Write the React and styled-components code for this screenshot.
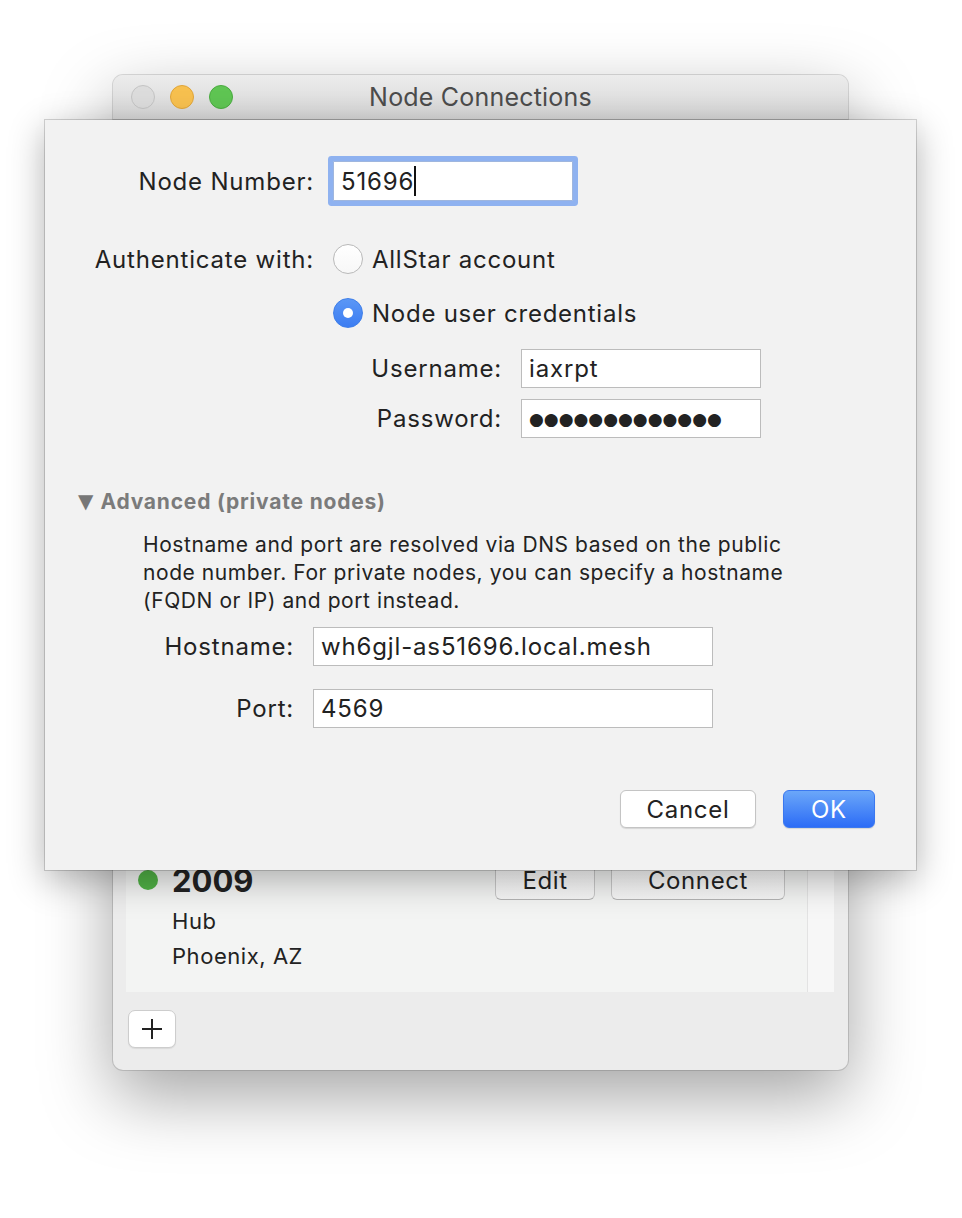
import styled, { createGlobalStyle } from "styled-components";

const GlobalStyle = createGlobalStyle`
  html, body {
    margin: 0;
    padding: 0;
    background: #ffffff;
  }
  body {
    font-family: "Inter", "Roboto", "Liberation Sans", sans-serif;
    color: #222;
    -webkit-font-smoothing: antialiased;
  }
`;

const Stage = styled.div`
  width: 962px;
  height: 1218px;
  padding: 75px 0 0 113px;
  box-sizing: border-box;
  display: flex;
  align-items: flex-start;
`;

const Window = styled.div`
  position: relative;
  width: 735px;
  height: 995px;
  display: flex;
  flex-direction: column;
  background: #ececec;
  border-radius: 10px;
  box-shadow: 0 0 0 1px rgba(0, 0, 0, 0.13), 0 26px 70px rgba(0, 0, 0, 0.36);
`;

const TitleBar = styled.div`
  height: 44px;
  display: grid;
  grid-template-columns: 1fr auto 1fr;
  align-items: center;
  padding: 0 18px;
  background: linear-gradient(#ececec, #d6d6d6);
  border-bottom: 1px solid #bcbcbc;
  border-radius: 10px 10px 0 0;
`;

const Lights = styled.div`
  display: flex;
  gap: 15px;
`;

const Light = styled.span`
  width: 22px;
  height: 22px;
  border-radius: 50%;
  background: ${(p) => p.$fill};
  border: 1px solid ${(p) => p.$edge};
`;

const Title = styled.div`
  font-size: 25px;
  color: #4c4c4c;
  letter-spacing: 0.2px;
`;

const Content = styled.div`
  flex: 1;
  display: flex;
  flex-direction: column;
  padding: 0 14px 22px 13px;
`;

const List = styled.div`
  flex: 1;
  display: grid;
  grid-template-columns: 1fr 27px;
`;

const Rows = styled.div`
  display: flex;
  flex-direction: column;
  justify-content: flex-end;
  background: #f3f4f3;
`;

const ScrollTrack = styled.div`
  background: #f7f7f7;
  border-left: 1px solid #e3e3e3;
`;

const NodeRow = styled.div`
  padding: 0 22px 18px 12px;
`;

const NodeHeader = styled.div`
  height: 40px;
  display: flex;
  align-items: center;
  margin-bottom: 4px;
`;

const StatusDot = styled.span`
  width: 20px;
  height: 20px;
  border-radius: 50%;
  background: #51b246;
  margin-right: 14px;
`;

const NodeNumber = styled.span`
  font-size: 31px;
  font-weight: 700;
  color: #222;
  flex: 1;
`;

const RowButton = styled.button`
  height: 40px;
  width: ${(p) => p.$w}px;
  margin-left: ${(p) => p.$ml || 0}px;
  padding: 0;
  font-family: inherit;
  font-size: 24px;
  letter-spacing: 0.6px;
  color: #222;
  background: linear-gradient(#ffffff, #f6f6f6);
  border: 1px solid #c9c9c9;
  border-bottom-color: #b4b4b4;
  border-radius: 6px;
`;

const NodeLine = styled.div`
  margin-left: 34px;
  font-size: 22px;
  letter-spacing: 0.55px;
  line-height: 35px;
  color: #222;
`;

const Footer = styled.div`
  margin-top: 18px;
  display: flex;
`;

const PlusButton = styled.button`
  margin-left: 2px;
  width: 48px;
  height: 38px;
  display: flex;
  align-items: center;
  justify-content: center;
  background: #fff;
  border: 1px solid #cdcdcd;
  border-radius: 7px;
  box-shadow: 0 1px 1px rgba(0, 0, 0, 0.08);
  padding: 0;
`;

/* ---- sheet ---- */

const Sheet = styled.div`
  position: absolute;
  top: 45px;
  left: -68px;
  width: 871px;
  box-sizing: border-box;
  padding: 41px 0 42px;
  background: #f2f2f2;
  box-shadow: 0 0 0 1px rgba(0, 0, 0, 0.16), 0 10px 34px rgba(0, 0, 0, 0.3);
  display: flex;
  flex-direction: column;
`;

const Row = styled.div`
  display: flex;
  align-items: center;
  margin-top: ${(p) => p.$mt || 0}px;
  padding-left: ${(p) => p.$indent || 0}px;
`;

const Label = styled.span`
  width: ${(p) => p.$w}px;
  margin-right: 19px;
  text-align: right;
  font-size: 24px;
  letter-spacing: 0.8px;
  color: #222;
  white-space: nowrap;
`;

const Field = styled.div`
  width: ${(p) => p.$w}px;
  height: ${(p) => p.$h || 39}px;
  box-sizing: border-box;
  display: flex;
  align-items: center;
  padding-left: 7px;
  background: #fff;
  border: 1px solid ${(p) => (p.$focus ? "#9fb6de" : "#bcbcbc")};
  box-shadow: ${(p) => (p.$focus ? "0 0 0 5px #8fb2f0" : "none")};
  border-radius: ${(p) => (p.$focus ? "1px" : "0")};
  font-size: 24px;
  letter-spacing: 0.85px;
  color: #222;
`;

const Caret = styled.span`
  width: 2px;
  height: 30px;
  margin-left: 0;
  background: #111;
`;

const Dots = styled.span`
  font-family: "DejaVu Sans", sans-serif;
  font-size: 17px;
  letter-spacing: 0;
  color: #222;
`;

const Radio = styled.span`
  width: 30px;
  height: 30px;
  box-sizing: border-box;
  border-radius: 50%;
  margin-right: 9px;
  display: flex;
  align-items: center;
  justify-content: center;
  background: ${(p) =>
    p.$on ? "linear-gradient(#5b97f6, #3c7df2)" : "linear-gradient(#ffffff, #f7f7f7)"};
  border: 1px solid ${(p) => (p.$on ? "#3f7fe9" : "#b9b9b9")};
  &::after {
    content: "";
    display: ${(p) => (p.$on ? "block" : "none")};
    width: 10px;
    height: 10px;
    border-radius: 50%;
    background: #fff;
  }
`;

const RadioText = styled.span`
  font-size: 24px;
  letter-spacing: 0.75px;
  color: #222;
`;

const Disclosure = styled.div`
  margin-top: 49px;
  padding-left: 33px;
  height: 28px;
  display: flex;
  align-items: center;
  color: #7b7b7b;
  font-size: 21px;
  letter-spacing: 0.8px;
  font-weight: 700;
`;

const Triangle = styled.span`
  font-family: "DejaVu Sans", sans-serif;
  font-size: 20px;
  letter-spacing: 0;
  margin-right: 7px;
  color: #777;
`;

const Help = styled.p`
  margin: 16px 0 0;
  padding-left: 98px;
  width: 690px;
  font-size: 21px;
  letter-spacing: 0.57px;
  line-height: 28px;
  color: #222;
`;

const ButtonBar = styled.div`
  margin-top: 62px;
  padding-right: 41px;
  display: flex;
  justify-content: flex-end;
  gap: 27px;
`;

const PushButton = styled.button`
  height: 38px;
  width: ${(p) => p.$w}px;
  font-family: inherit;
  font-size: 24px;
  letter-spacing: 0.7px;
  border-radius: 6px;
  padding: 0;
  color: ${(p) => (p.$primary ? "#fff" : "#222")};
  background: ${(p) =>
    p.$primary ? "linear-gradient(#6ba7f9, #2c6cf6)" : "#fff"};
  border: 1px solid ${(p) => (p.$primary ? "#3b78ef" : "#c4c4c4")};
  box-shadow: 0 1px 1px rgba(0, 0, 0, 0.12);
`;

const PlusIcon = () => (
  <svg width="22" height="22" viewBox="0 0 22 22">
    <path d="M11 1v20M1 11h20" stroke="#222" strokeWidth="2" fill="none" />
  </svg>
);

export default function App() {
  return (
    <>
      <GlobalStyle />
      <Stage>
        <Window>
          <TitleBar>
            <Lights>
              <Light $fill="#dcdcdc" $edge="#c4c4c4" />
              <Light $fill="#f7c04f" $edge="#e0a53a" />
              <Light $fill="#5fc553" $edge="#4aab40" />
            </Lights>
            <Title>Node Connections</Title>
            <span />
          </TitleBar>
          <Content>
            <List>
              <Rows>
                <NodeRow>
                  <NodeHeader>
                    <StatusDot />
                    <NodeNumber>2009</NodeNumber>
                    <RowButton $w={100}>Edit</RowButton>
                    <RowButton $w={174} $ml={16}>Connect</RowButton>
                  </NodeHeader>
                  <NodeLine>Hub</NodeLine>
                  <NodeLine>Phoenix, AZ</NodeLine>
                </NodeRow>
              </Rows>
              <ScrollTrack />
            </List>
            <Footer>
              <PlusButton>
                <PlusIcon />
              </PlusButton>
            </Footer>
          </Content>

          <Sheet>
            <Row>
              <Label $w={269}>Node Number:</Label>
              <Field $w={240} $h={40} $focus>
                51696
                <Caret />
              </Field>
            </Row>
            <Row $mt={43}>
              <Label $w={269}>Authenticate with:</Label>
              <Radio />
              <RadioText>AllStar account</RadioText>
            </Row>
            <Row $mt={24} $indent={288}>
              <Radio $on />
              <RadioText>Node user credentials</RadioText>
            </Row>
            <Row $mt={21} $indent={288}>
              <Label $w={169}>Username:</Label>
              <Field $w={240}>iaxrpt</Field>
            </Row>
            <Row $mt={11} $indent={288}>
              <Label $w={169}>Password:</Label>
              <Field $w={240}>
                <Dots>●●●●●●●●●●●●●</Dots>
              </Field>
            </Row>

            <Disclosure>
              <Triangle>▼</Triangle>
              Advanced (private nodes)
            </Disclosure>
            <Help>
              Hostname and port are resolved via DNS based on the public node
              number. For private nodes, you can specify a hostname (FQDN or
              IP) and port instead.
            </Help>
            <Row $mt={12}>
              <Label $w={249}>Hostname:</Label>
              <Field $w={400}>wh6gjl-as51696.local.mesh</Field>
            </Row>
            <Row $mt={23}>
              <Label $w={249}>Port:</Label>
              <Field $w={400}>4569</Field>
            </Row>

            <ButtonBar>
              <PushButton $w={136}>Cancel</PushButton>
              <PushButton $w={92} $primary>
                OK
              </PushButton>
            </ButtonBar>
          </Sheet>
        </Window>
      </Stage>
    </>
  );
}
